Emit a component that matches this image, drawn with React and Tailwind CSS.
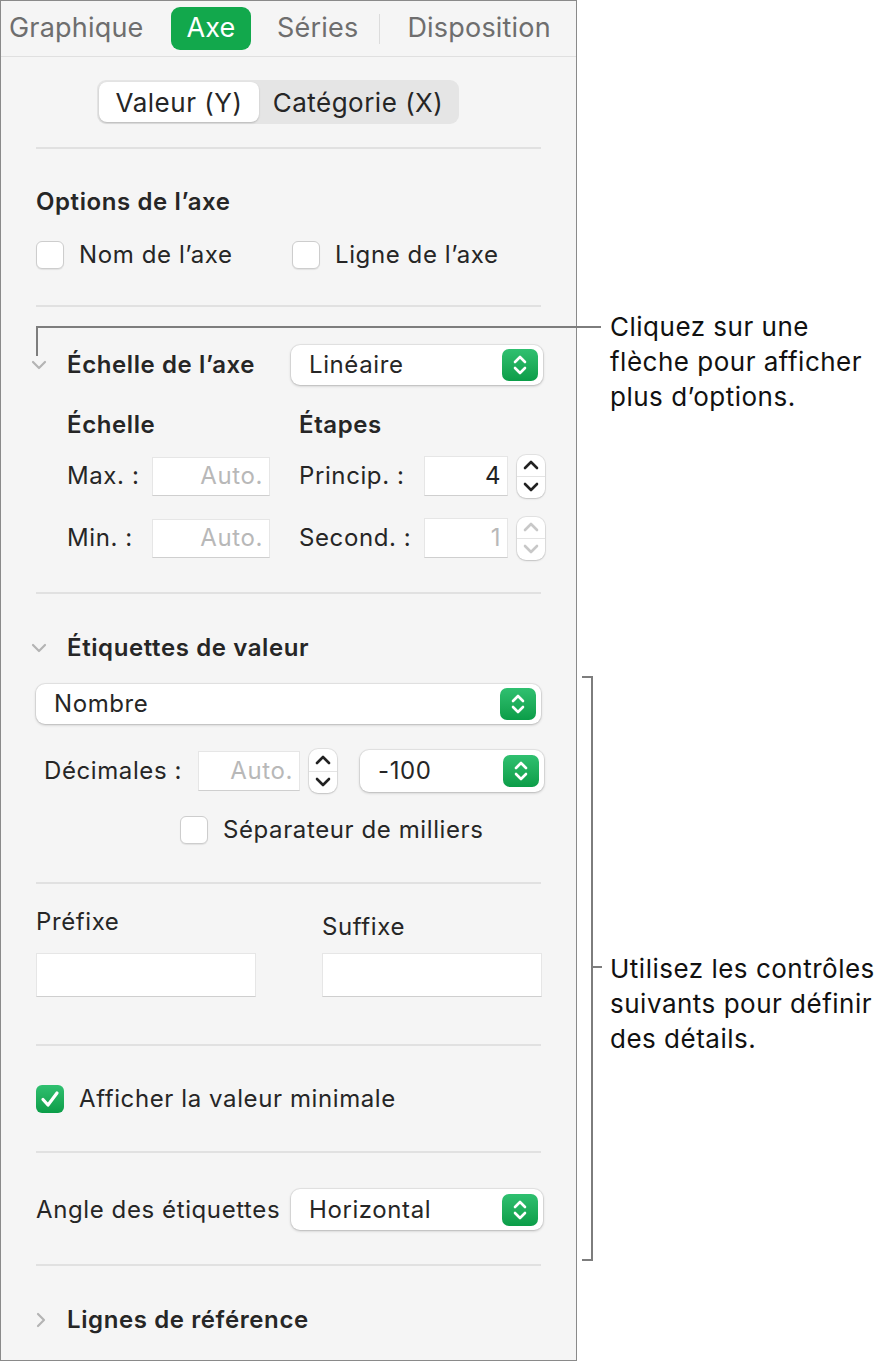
import React from "react";

const font = { fontFamily: "Inter, 'Noto Sans', sans-serif" };

function GreenStepper() {
  return (
    <div className="w-[36px] h-[32px] rounded-[7px] bg-gradient-to-b from-[#2fc070] to-[#0a9d48] flex items-center justify-center">
      <svg width="16" height="24" viewBox="0 0 16 24" fill="none" stroke="white" strokeWidth="2.6" strokeLinecap="round" strokeLinejoin="round">
        <path d="M3 9 L8 4 L13 9" />
        <path d="M3 15 L8 20 L13 15" />
      </svg>
    </div>
  );
}

function Select({ label, className = "" }) {
  return (
    <div className={"bg-white rounded-[9px] shadow-[0_0_0_1px_rgba(0,0,0,0.06),0_1px_3px_rgba(0,0,0,0.22)] flex items-center justify-between pl-[18px] pr-[5px] " + className}>
      <span className="text-[24px] tracking-[0.6px] text-[#262626]">{label}</span>
      <GreenStepper />
    </div>
  );
}

function NumStepper({ disabled = false, className = "" }) {
  const c = disabled ? "#c8c8c8" : "#222";
  return (
    <div className={"w-[28px] bg-white rounded-[9px] shadow-[0_0_0_1px_rgba(0,0,0,0.07),0_1px_2px_rgba(0,0,0,0.15)] flex flex-col " + className}>
      <div className="flex-1 flex items-center justify-center border-b border-[#e4e4e4]">
        <svg width="16" height="10" viewBox="0 0 16 10" fill="none" stroke={c} strokeWidth="2.6" strokeLinecap="round" strokeLinejoin="round">
          <path d="M2 8 L8 2 L14 8" />
        </svg>
      </div>
      <div className="flex-1 flex items-center justify-center">
        <svg width="16" height="10" viewBox="0 0 16 10" fill="none" stroke={c} strokeWidth="2.6" strokeLinecap="round" strokeLinejoin="round">
          <path d="M2 2 L8 8 L14 2" />
        </svg>
      </div>
    </div>
  );
}

function Field({ value = "", placeholder = false, disabled = false, className = "" }) {
  return (
    <div className={"bg-white border border-[#e6e6e6] border-b-[#cfcfcf] flex items-center justify-end pr-[6px] " + (disabled ? "bg-[#fafafa] " : "") + className}>
      <span className={"text-[24px] tracking-[0.6px] " + (placeholder || disabled ? "text-[#b8b8b8]" : "text-[#222]")}>{value}</span>
    </div>
  );
}

function Checkbox({ checked = false }) {
  if (checked) {
    return (
      <div className="w-[28px] h-[28px] rounded-[6px] bg-gradient-to-b from-[#2fc070] to-[#0a9d48] flex items-center justify-center">
        <svg width="20" height="18" viewBox="0 0 20 18" fill="none" stroke="white" strokeWidth="3.2" strokeLinecap="round" strokeLinejoin="round">
          <path d="M3 9.5 L8 15 L17 3" />
        </svg>
      </div>
    );
  }
  return <div className="w-[28px] h-[28px] rounded-[6px] bg-white border border-[#cdcdcd] shadow-[0_1px_1px_rgba(0,0,0,0.08)]" />;
}

function ChevronDown() {
  return (
    <svg width="16" height="10" viewBox="0 0 16 10" fill="none" stroke="#b4b4b4" strokeWidth="2.2" strokeLinecap="round" strokeLinejoin="round">
      <path d="M2 2 L8 8 L14 2" />
    </svg>
  );
}

function ChevronRight() {
  return (
    <svg width="10" height="16" viewBox="0 0 10 16" fill="none" stroke="#b4b4b4" strokeWidth="2.2" strokeLinecap="round" strokeLinejoin="round">
      <path d="M2 2 L8 8 L2 14" />
    </svg>
  );
}

function Divider({ mt }) {
  return <div className={"mx-[35px] h-[2px] bg-[#e1e1e1] " + mt} />;
}

export default function App() {
  return (
    <div className="relative w-[894px] h-[1362px] bg-white flex" style={font}>
      {/* Panel */}
      <div className="w-[577px] h-[1361px] border border-[#8a8a8a] bg-[#f5f5f5] flex flex-col text-[#262626] text-[24px] tracking-[0.6px]">
        {/* Tabs */}
        <div className="h-[56px] shrink-0 border-b border-[#e0e0e0] flex items-center pl-[8px] text-[27px] tracking-[0.2px] text-[#6e6e6e]">
          <span className="w-[162px]">Graphique</span>
          <span className="w-[80px] h-[43px] rounded-[9px] bg-[#12a84c] text-white flex items-center justify-center">Axe</span>
          <span className="ml-[26px]">Séries</span>
          <span className="ml-[21px] w-px h-[30px] bg-[#dcdcdc]" />
          <span className="ml-[27px]">Disposition</span>
        </div>

        {/* Segmented */}
        <div className="mt-[23px] ml-[96px] flex">
          <div className="h-[44px] w-[362px] rounded-[9px] bg-[#e5e5e5] flex items-center p-[2px] text-[26px] tracking-[0.5px]">
            <div className="h-full w-[160px] bg-white rounded-[8px] shadow-[0_1px_2px_rgba(0,0,0,0.2)] flex items-center justify-center">Valeur (Y)</div>
            <div className="flex-1 flex items-center justify-center">Catégorie (X)</div>
          </div>
        </div>

        <Divider mt="mt-[23px]" />

        {/* Options de l'axe */}
        <div className="mt-[38px] ml-[35px] h-[30px] flex items-center font-semibold">Options de l’axe</div>
        <div className="mt-[23px] ml-[35px] h-[30px] flex items-center">
          <Checkbox />
          <span className="ml-[15px] w-[213px]">Nom de l’axe</span>
          <Checkbox />
          <span className="ml-[15px]">Ligne de l’axe</span>
        </div>

        <Divider mt="mt-[35px]" />

        {/* Échelle de l'axe */}
        <div className="mt-[38px] h-[40px] flex items-center">
          <div className="w-[66px] pl-[30px] flex items-center"><ChevronDown /></div>
          <span className="font-semibold w-[224px]">Échelle de l’axe</span>
          <Select label="Linéaire" className="w-[252px] h-[40px]" />
        </div>

        <div className="mt-[25px] h-[30px] flex items-center font-semibold">
          <span className="ml-[66px] w-[232px]">Échelle</span>
          <span>Étapes</span>
        </div>

        <div className="mt-[16px] h-[40px] flex items-center">
          <span className="ml-[66px] w-[85px]">Max. :</span>
          <Field value="Auto." placeholder className="w-[118px] h-[39px]" />
          <span className="ml-[29px] w-[125px]">Princip. :</span>
          <Field value="4" className="w-[84px] h-[40px]" />
          <NumStepper className="ml-[9px] h-[43px]" />
        </div>

        <div className="mt-[22px] h-[40px] flex items-center">
          <span className="ml-[66px] w-[85px]">Min. :</span>
          <Field value="Auto." placeholder className="w-[118px] h-[39px]" />
          <span className="ml-[29px] w-[125px]">Second. :</span>
          <Field value="1" disabled className="w-[84px] h-[40px]" />
          <NumStepper disabled className="ml-[9px] h-[43px]" />
        </div>

        <Divider mt="mt-[34px]" />

        {/* Étiquettes de valeur */}
        <div className="mt-[39px] h-[30px] flex items-center">
          <div className="w-[66px] pl-[30px] flex items-center"><ChevronDown /></div>
          <span className="font-semibold">Étiquettes de valeur</span>
        </div>

        <Select label="Nombre" className="mt-[21px] mx-[35px] h-[40px]" />

        <div className="mt-[26px] h-[42px] flex items-center">
          <span className="ml-[43px] w-[154px]">Décimales :</span>
          <Field value="Auto." placeholder className="w-[102px] h-[40px]" />
          <NumStepper className="ml-[9px] h-[44px]" />
          <Select label="-100" className="ml-[23px] w-[184px] h-[42px]" />
        </div>

        <div className="mt-[23px] h-[30px] flex items-center">
          <div className="ml-[179px]"><Checkbox /></div>
          <span className="ml-[15px]">Séparateur de milliers</span>
        </div>

        <Divider mt="mt-[37px]" />

        {/* Préfixe / Suffixe */}
        <div className="mt-[23px] flex">
          <div className="ml-[35px] w-[220px] flex flex-col">
            <span className="h-[30px] flex items-center">Préfixe</span>
            <div className="mt-[16px] h-[44px] bg-white border border-[#e6e6e6] border-b-[#cfcfcf]" />
          </div>
          <div className="ml-[66px] w-[220px] flex flex-col">
            <span className="h-[30px] mt-[5px] flex items-center">Suffixe</span>
            <div className="mt-[11px] h-[44px] bg-white border border-[#e6e6e6] border-b-[#cfcfcf]" />
          </div>
        </div>

        <Divider mt="mt-[47px]" />

        {/* Afficher */}
        <div className="mt-[38px] ml-[35px] h-[30px] flex items-center">
          <Checkbox checked />
          <span className="ml-[15px]">Afficher la valeur minimale</span>
        </div>

        <Divider mt="mt-[37px]" />

        {/* Angle */}
        <div className="mt-[36px] ml-[35px] h-[41px] flex items-center">
          <span className="w-[255px]">Angle des étiquettes</span>
          <Select label="Horizontal" className="w-[252px] h-[41px]" />
        </div>

        <Divider mt="mt-[34px]" />

        {/* Lignes de référence */}
        <div className="mt-[39px] h-[30px] flex items-center">
          <div className="w-[66px] pl-[35px] flex items-center"><ChevronRight /></div>
          <span className="font-semibold">Lignes de référence</span>
        </div>
      </div>

      {/* Annotations column */}
      <div className="flex-1 pl-[33px] flex flex-col text-[26px] tracking-[0.5px] leading-[35px] text-[#111]">
        <div className="mt-[309px]">Cliquez sur une<br />flèche pour afficher<br />plus d’options.</div>
        <div className="mt-[537px]">Utilisez les contrôles<br />suivants pour définir<br />des détails.</div>
      </div>

      {/* Callout lines (overlay) */}
      <div className="absolute left-[36px] top-[326px] w-[565px] h-[2px] bg-[#7d7d7d]" />
      <div className="absolute left-[36px] top-[326px] w-[2px] h-[30px] bg-[#7d7d7d]" />
      <div className="absolute left-[591px] top-[676px] w-[2px] h-[585px] bg-[#7d7d7d]" />
      <div className="absolute left-[582px] top-[676px] w-[10px] h-[2px] bg-[#7d7d7d]" />
      <div className="absolute left-[582px] top-[1259px] w-[10px] h-[2px] bg-[#7d7d7d]" />
      <div className="absolute left-[591px] top-[966px] w-[11px] h-[2px] bg-[#7d7d7d]" />
    </div>
  );
}
